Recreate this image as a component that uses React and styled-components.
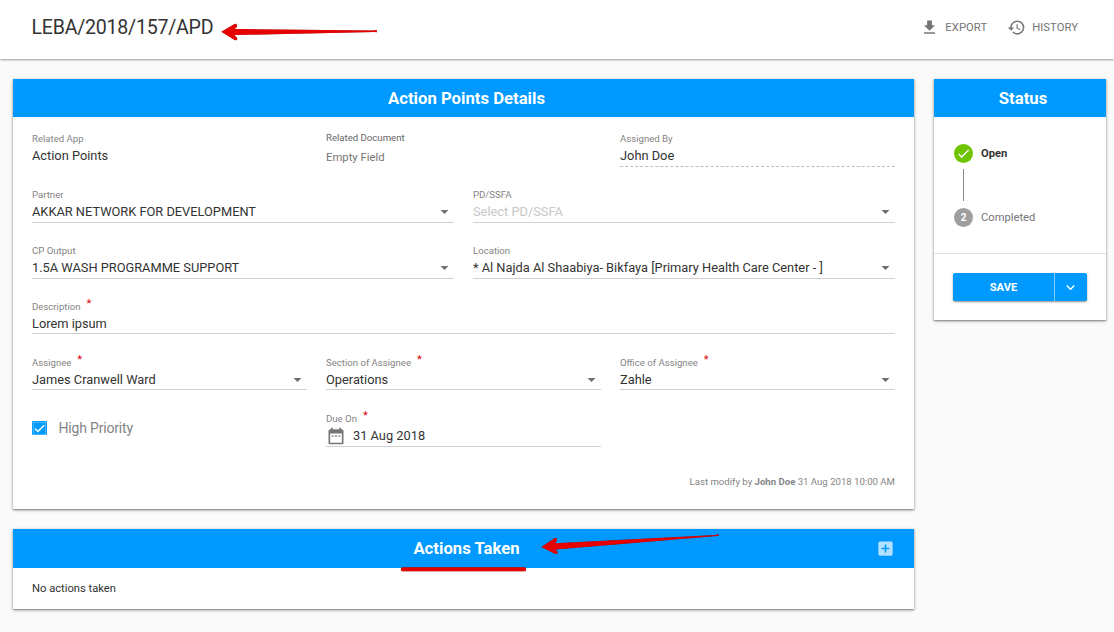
import React from "react";
import styled, { createGlobalStyle } from "styled-components";
import {
  MdFileDownload,
  MdHistory,
  MdArrowDropDown,
  MdDateRange,
  MdAddBox,
  MdCheck,
  MdExpandMore,
} from "react-icons/md";

const GlobalStyle = createGlobalStyle`
  * { box-sizing: border-box; }
  body {
    margin: 0;
    background: #fafafa;
    color: #333;
    font-family: Roboto, "Liberation Sans", sans-serif;
    overflow: hidden;
  }
  svg { display: block; flex: none; }
`;

const Page = styled.div`
  height: 632px;
  position: relative;
`;

const TopBar = styled.header`
  height: 59px;
  padding: 0 36px 5px 31.5px;
  display: flex;
  align-items: center;
  background: #fff;
  box-shadow: 0 1px 2px rgba(0, 0, 0, 0.38);
`;

const Title = styled.h1`
  margin: 0 auto 0 0;
  font-size: 19.6px;
  font-weight: 400;
  line-height: 25px;
  white-space: nowrap;
  letter-spacing: -0.25px;
`;

const ToolButton = styled.div`
  display: flex;
  align-items: center;
  gap: 6px;
  margin-left: ${(p) => p.$gap || "0"};
  color: #757575;
  font-size: 11.25px;
  letter-spacing: 0.05px;
  line-height: 20px;
  white-space: nowrap;
  padding-top: 1px;
  svg { margin-top: -1px; }
`;

const Main = styled.main`
  display: flex;
  align-items: flex-start;
  gap: 20px;
  padding: 20px 8px 0 13px;
`;

const Column = styled.div`
  width: ${(p) => p.$width};
  display: flex;
  flex-direction: column;
  gap: 20px;
`;

const Card = styled.section`
  height: ${(p) => p.$height};
  background: #fff;
  box-shadow: 0 1px 3px rgba(0, 0, 0, 0.42), 0 1px 1px rgba(0, 0, 0, 0.18);
`;

const CardHeader = styled.h2`
  position: relative;
  margin: 0;
  height: ${(p) => p.$height || "38px"};
  display: flex;
  align-items: center;
  justify-content: center;
  background: #0099ff;
  color: #fff;
  font-size: 16.7px;
  font-weight: 700;
  padding: 0 0 ${(p) => p.$drop || "0"} 6px;
`;

const AddButton = styled.span`
  position: absolute;
  right: 19px;
  color: rgba(255, 255, 255, 0.7);
`;

const Row = styled.div`
  height: 56px;
  padding: 0 19px;
  display: grid;
  grid-template-columns: repeat(${(p) => p.$cols}, 1fr);
  column-gap: 19px;
`;

const FieldBox = styled.div`
  padding-top: ${(p) => (p.$raised ? "14px" : "15px")};
`;

const Label = styled.div`
  height: ${(p) => (p.$raised ? "17px" : "14px")};
  display: flex;
  font-size: 9.6px;
  line-height: 14px;
  color: ${(p) => (p.$raised ? "#666" : "#848484")};
  white-space: nowrap;
`;

const Required = styled.span`
  margin: -3px 0 0 6px;
  font-size: 11.2px;
  color: #dd0000;
`;

const Value = styled.div`
  height: ${(p) => (p.$short ? "20px" : "21px")};
  display: flex;
  align-items: ${(p) => (p.$icon ? "center" : "flex-start")};
  border-bottom: 1px ${(p) => p.$line || "solid"} ${(p) => (p.$line === "dashed" ? "#bdbdbd" : "#d0d0d0")};
  color: ${(p) => (p.$muted ? "#c8c8c8" : p.$empty ? "#757575" : "#333")};
  font-size: ${(p) => (p.$empty ? "11.3px" : "12.82px")};
  line-height: 20px;
  white-space: nowrap;
`;

const ValueText = styled.span`
  flex: 1;
`;

const CaretIcon = styled(MdArrowDropDown)`
  width: 19px;
  height: 19px;
  color: #6e6e6e;
`;

const CalendarIcon = styled(MdDateRange)`
  width: 20px;
  height: 20px;
  margin: 0 7.5px 0 -0.5px;
  color: #757575;
`;

const CheckRow = styled.div`
  display: flex;
  align-items: center;
  gap: 11.5px;
  height: 62px;
  color: #858585;
  font-size: 14px;
  letter-spacing: -0.18px;
`;

const CheckBox = styled.span`
  width: 15px;
  height: 14px;
  display: flex;
  align-items: center;
  justify-content: center;
  border-radius: 1px;
  background: #0099ff;
  color: #fff;
`;

const Modified = styled.div`
  margin-top: 21px;
  padding-right: 19px;
  text-align: right;
  color: #858585;
  font-size: 9.6px;
  line-height: 16px;
  b { font-weight: 700; }
`;

const EmptyNote = styled.div`
  padding: 0 19px;
  font-size: 11.2px;
  line-height: 41px;
`;

const Steps = styled.div`
  height: 137px;
  padding: 27px 20px 0;
  border-bottom: 1px solid #e0e0e0;
`;

const Step = styled.div`
  display: flex;
  align-items: center;
  gap: 8px;
  height: 19px;
  font-size: 11.2px;
  font-weight: ${(p) => (p.$active ? 700 : 400)};
  color: ${(p) => (p.$active ? "#333" : "#757575")};
`;

const StepBadge = styled.span`
  width: 19px;
  height: 19px;
  border-radius: 50%;
  display: flex;
  align-items: center;
  justify-content: center;
  background: ${(p) => (p.$done ? "#6fc400" : "#9e9e9e")};
  color: #fff;
  font-size: 10px;
  font-weight: 700;
`;

const Connector = styled.div`
  width: 1px;
  height: 32px;
  margin: 6px 0 7px 9px;
  background: #8a8a8a;
`;

const SaveGroup = styled.div`
  display: flex;
  width: 134px;
  height: 28px;
  margin: 19px 0 0 19px;
  border-radius: 2px;
  overflow: hidden;
  background: #0099ff;
  color: #fff;
  box-shadow: 0 1px 2px rgba(0, 0, 0, 0.45);
`;

const SaveMain = styled.div`
  width: 102px;
  display: flex;
  align-items: center;
  justify-content: center;
  border-right: 1px solid #80ccff;
  font-size: 11.2px;
  font-weight: 700;
`;

const SaveMore = styled.div`
  flex: 1;
  display: flex;
  align-items: center;
  justify-content: center;
  padding-right: 1px;
`;

const Annotations = styled.svg`
  position: absolute;
  inset: 0;
  pointer-events: none;
  filter: drop-shadow(0.5px 0.8px 0.4px rgba(0, 0, 0, 0.5));
`;

function Field({ label, required, value, caret, icon, line, muted, empty, short }) {
  return (
    <FieldBox $raised={empty}>
      <Label $raised={empty}>
        {label}
        {required && <Required>*</Required>}
      </Label>
      <Value $line={line} $muted={muted} $empty={empty} $short={short} $icon={icon}>
        {icon && <CalendarIcon />}
        <ValueText>{value}</ValueText>
        {caret && <CaretIcon />}
      </Value>
    </FieldBox>
  );
}

export default function App() {
  return (
    <Page>
      <GlobalStyle />
      <TopBar>
        <Title>LEBA/2018/157/APD</Title>
        <ToolButton>
          <MdFileDownload size={19} />
          EXPORT
        </ToolButton>
        <ToolButton $gap="20px">
          <MdHistory size={19} />
          HISTORY
        </ToolButton>
      </TopBar>
      <Main>
        <Column $width="901px">
          <Card $height="430px">
            <CardHeader>Action Points Details</CardHeader>
            <Row $cols={3}>
              <Field label="Related App" value="Action Points" line="none" />
              <Field label="Related Document" value="Empty Field" line="none" empty />
              <Field label="Assigned By" value="John Doe" line="dashed" />
            </Row>
            <Row $cols={2}>
              <Field label="Partner" value="AKKAR NETWORK FOR DEVELOPMENT" caret />
              <Field label="PD/SSFA" value="Select PD/SSFA" muted caret />
            </Row>
            <Row $cols={2}>
              <Field label="CP Output" value="1.5A WASH PROGRAMME SUPPORT" caret />
              <Field
                label="Location"
                value="* Al Najda Al Shaabiya- Bikfaya [Primary Health Care Center - ]"
                caret
              />
            </Row>
            <Row $cols={1}>
              <Field label="Description" required value="Lorem ipsum" short />
            </Row>
            <Row $cols={3}>
              <Field label="Assignee" required value="James Cranwell Ward" caret short />
              <Field label="Section of Assignee" required value="Operations" caret short />
              <Field label="Office of Assignee" required value="Zahle" caret short />
            </Row>
            <Row $cols={3}>
              <CheckRow>
                <CheckBox>
                  <MdCheck size={13} stroke="currentColor" strokeWidth={1} />
                </CheckBox>
                High Priority
              </CheckRow>
              <Field label="Due On" required value="31 Aug 2018" icon />
            </Row>
            <Modified>
              Last modify by <b>John Doe</b> 31 Aug 2018 10:00 AM
            </Modified>
          </Card>
          <Card $height="80px">
            <CardHeader $height="39px" $drop="1px">
              Actions Taken
              <AddButton>
                <MdAddBox size={19} />
              </AddButton>
            </CardHeader>
            <EmptyNote>No actions taken</EmptyNote>
          </Card>
        </Column>
        <Column $width="172px">
          <Card $height="241px">
            <CardHeader>Status</CardHeader>
            <Steps>
              <Step $active>
                <StepBadge $done>
                  <MdCheck size={15} />
                </StepBadge>
                Open
              </Step>
              <Connector />
              <Step>
                <StepBadge>2</StepBadge>
                Completed
              </Step>
            </Steps>
            <SaveGroup>
              <SaveMain>SAVE</SaveMain>
              <SaveMore>
                <MdExpandMore size={17} />
              </SaveMore>
            </SaveGroup>
          </Card>
        </Column>
      </Main>
      <Annotations width="1114" height="632" viewBox="0 0 1114 632">
        <g fill="#e60000">
          <path d="M221.3 31.8 L235 23.8 Q238 24 236.8 27 L234.5 29 L374.5 30.6 L374.5 30 L376.8 30 L376.8 32.2 L374.5 32 L234.5 35 L237 38 Q238 40.5 235 40.3 Z" />
          <path d="M541.3 547 L555 538 Q557.8 538.2 556.8 541 L555 543.3 L716.5 534.9 L716.5 534.3 L718.5 534.3 L718.5 536 L716.5 536 L555.5 549.5 L557.5 551.8 Q558 554 555.5 554.1 Z" />
          <rect x="401" y="567.2" width="125" height="4" rx="1.5" />
        </g>
      </Annotations>
    </Page>
  );
}
